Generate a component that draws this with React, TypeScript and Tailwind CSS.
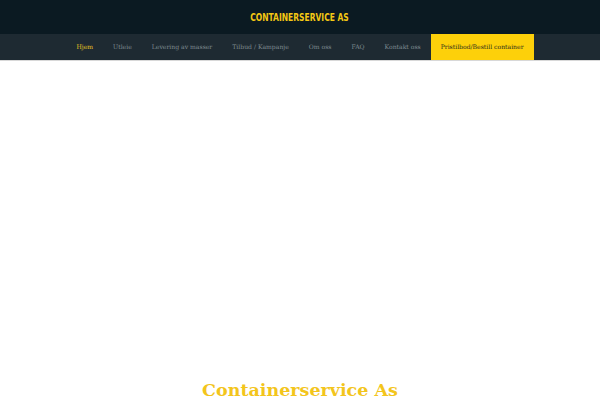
import React from "react";

const items = ["Hjem", "Utleie", "Levering av masser", "Tilbud / Kampanje", "Om oss", "FAQ", "Kontakt oss"];

export default function App() {
  return (
    <div className="min-h-[400px] w-full bg-white overflow-hidden">
      <div className="h-[34px] bg-[#0b1a22] flex items-center justify-center pt-[1px]">
        <span
          className="inline-block scale-x-[0.8] text-[10.5px] font-bold text-[#f5c814] leading-none"
          style={{ fontFamily: '"DejaVu Sans Condensed", "DejaVu Sans", sans-serif', fontStretch: "condensed" }}
        >
          CONTAINERSERVICE AS
        </span>
      </div>
      <div className="h-[26px] bg-[#1e2a32] border-b border-[#d8d8d8] box-content flex justify-center">
        <nav
          className="flex items-stretch text-[6.1px]"
          style={{ fontFamily: '"DejaVu Serif", serif' }}
        >
          {items.map((t, i) => (
            <a
              key={t}
              className={
                "flex items-center px-[10px] " + (i === 0 ? "text-[#e9c623]" : "text-[#7f8a91]")
              }
            >
              {t}
            </a>
          ))}
          <a className="flex items-center px-[10px] bg-[#fdd00a] text-[#2a2a1a]">Pristilbod/Bestill container</a>
        </nav>
      </div>
      <div className="h-[321px]" />
      <h1
        className="text-center text-[17.5px] font-bold text-[#f3c51c] leading-none"
        style={{ fontFamily: '"DejaVu Serif", serif' }}
      >
        Containerservice As
      </h1>
    </div>
  );
}
